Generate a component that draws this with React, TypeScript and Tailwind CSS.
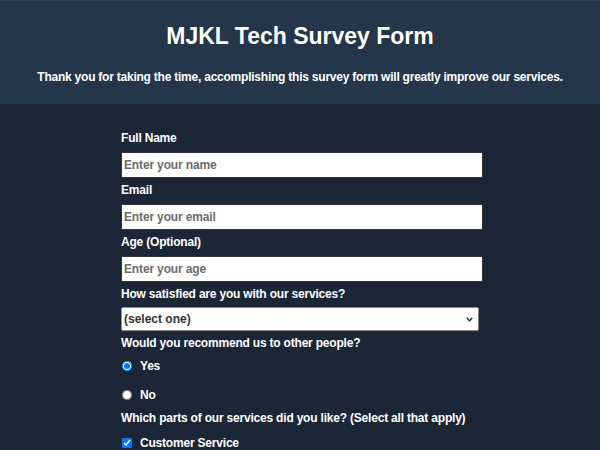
import { useState } from "react";

export default function App() {
  const [recommend, setRecommend] = useState("yes");

  const labelClass = "h-[20px] leading-[20px] whitespace-nowrap";
  const inputClass =
    "h-[26px] mt-[4px] mb-[2px] bg-white border border-[#333] px-[2px] text-[12px] tracking-[-0.15px] font-bold text-black placeholder:text-[#6b6b6b] outline-none";

  return (
    <div className="min-h-screen bg-[#1b2636] text-white font-[family-name:Liberation_Sans,Arial,sans-serif]">
      {/* Header */}
      <header className="bg-[#24364a] border-t border-[#2f4258] h-[104px] flex flex-col items-center">
        <h1 className="mt-[20px] text-[23px] leading-[30px] font-bold">MJKL Tech Survey Form</h1>
        <p className="mt-[18px] text-[12px] leading-[16px] tracking-[-0.23px] font-bold">
          Thank you for taking the time, accomplishing this survey form will greatly improve our services.
        </p>
      </header>

      {/* Form */}
      <div className="flex justify-center pl-[4px]">
        <form className="w-[362px] pt-[24px] flex flex-col text-[12px] tracking-[-0.2px] font-bold">
          <label className={labelClass}>Full Name</label>
          <input type="text" placeholder="Enter your name" className={inputClass} />
          <label className={labelClass}>Email</label>
          <input type="email" placeholder="Enter your email" className={inputClass} />
          <label className={labelClass}>Age (Optional)</label>
          <input type="number" placeholder="Enter your age" className={inputClass} />

          <label className={labelClass}>How satisfied are you with our services?</label>
          <div className="relative w-[358px] h-[24px] mt-[3px]">
            <select className="appearance-none w-full h-full bg-white border border-[#8a8a8a] rounded-[2px] pl-[2px] text-[12px] tracking-normal font-bold text-[#333] outline-none">
              <option>(select one)</option>
              <option>Very satisfied</option>
              <option>Satisfied</option>
              <option>Not satisfied</option>
            </select>
            <svg className="absolute right-[6px] top-[10px] pointer-events-none" width="7" height="5" viewBox="0 0 7 5">
              <path d="M0.8 0.8 L3.5 3.8 L6.2 0.8" fill="none" stroke="#333" strokeWidth="1.5" />
            </svg>
          </div>

          <label className={`${labelClass} mt-[2px]`}>Would you recommend us to other people?</label>
          <label className="h-[26px] flex items-center">
            <input
              type="radio"
              name="recommend"
              checked={recommend === "yes"}
              onChange={() => setRecommend("yes")}
              className="w-[10px] h-[10px] m-0 ml-[1px] mr-[8px] accent-[#0075ff]"
            />
            <span className="-mt-[1px]">Yes</span>
          </label>
          <label className="h-[26px] mt-[3px] flex items-center">
            <input
              type="radio"
              name="recommend"
              checked={recommend === "no"}
              onChange={() => setRecommend("no")}
              className="w-[10px] h-[10px] m-0 ml-[1px] mr-[8px] accent-[#0075ff]"
            />
            <span className="-mt-[1px]">No</span>
          </label>

          <label className={labelClass}>Which parts of our services did you like? (Select all that apply)</label>
          <label className="h-[26px] mt-[2px] flex items-center">
            <input
              type="checkbox"
              defaultChecked
              className="w-[10px] h-[10px] m-0 ml-[1px] mr-[8px] accent-[#0075ff]"
            />
            <span className="-mt-[1px]">Customer Service</span>
          </label>
        </form>
      </div>
    </div>
  );
}
